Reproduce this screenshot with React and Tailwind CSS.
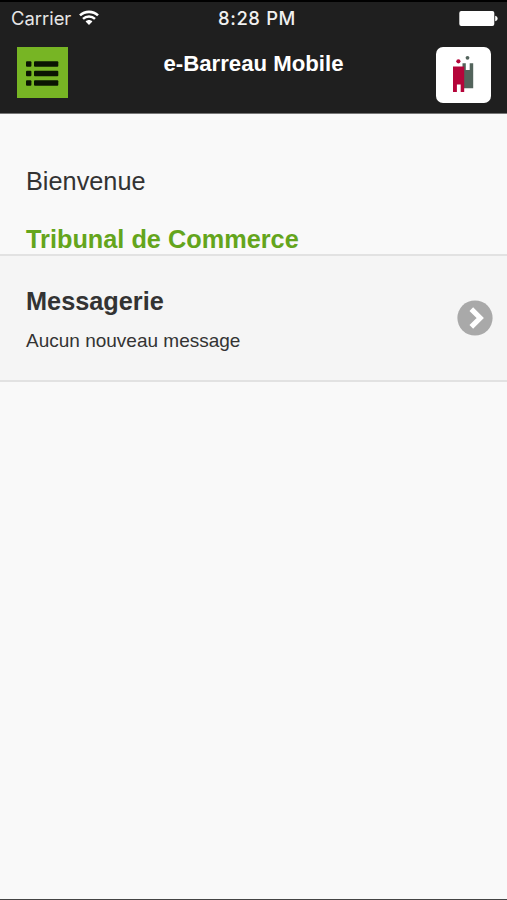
import React from "react";

const listRows = [0, 1, 2];

function WifiIcon() {
  return (
    <svg width="20" height="16" viewBox="0 0 20 16" fill="none">
      <path d="M1 5.4C6 .7 14 .7 19 5.4" stroke="#fff" strokeWidth="2.6" />
      <path d="M4 8.8C7.3 5.8 12.7 5.8 16 8.8" stroke="#fff" strokeWidth="2.5" />
      <path d="M6.6 11.5C8.4 9.5 11.6 9.5 13.4 11.5L10 15Z" fill="#fff" />
    </svg>
  );
}

function BatteryIcon() {
  return (
    <svg width="39" height="16" viewBox="0 0 39 16" fill="#fff">
      <rect x="0.3" y="0" width="35" height="15" rx="2" />
      <path d="M36.2 4.7C39.4 5.5 39.4 9.5 36.2 10.3Z" />
    </svg>
  );
}

function StatusBar() {
  return (
    <div className="grid h-[33px] grid-cols-3 items-center pl-[10px] pr-[9px] font-['Inter',sans-serif] text-white">
      <div className="flex items-center gap-[8px]">
        <span className="pl-px text-[18.4px] text-[#e6e6e6]">Carrier</span>
        <WifiIcon />
      </div>
      <div className="pl-[6px] text-center text-[18.4px] font-medium tracking-[0.65px] whitespace-nowrap text-[#f0f0f0]">
        8:28 PM
      </div>
      <div className="flex justify-end">
        <BatteryIcon />
      </div>
    </div>
  );
}

function MenuButton() {
  return (
    <button type="button" aria-label="Menu" className="h-[51px] w-[51px] bg-[#77b524]">
      <svg width="51" height="51" viewBox="0 0 51 51" fill="#0b1402">
        {listRows.map((row) => (
          <g key={row}>
            <rect x="9" y={14.3 + row * 9.5} width="5.4" height="5.5" rx="1" />
            <rect x="17" y={14.3 + row * 9.5} width="24.3" height="5.5" rx="1" />
          </g>
        ))}
      </svg>
    </button>
  );
}

function Logo() {
  return (
    <div className="h-[55.5px] w-[55px] rounded-[7px] bg-white">
      <svg width="55" height="55" viewBox="0 0 55 55">
        <path
          d="M26.5 16.2H29.8V23H33.7V16.2H37.2V41.2H26.5Z"
          fill="#53645c"
        />
        <circle cx="31.5" cy="10.8" r="1.9" fill="#53645c" />
        <path d="M17 19.4H28.2V45H24.7V37.5H20.9V45H17Z" fill="#b5053a" />
        <circle cx="22.4" cy="14.3" r="2.1" fill="#b5053a" />
      </svg>
    </div>
  );
}

function Header() {
  return (
    <header className="h-[114px] border-t-2 border-b border-t-black border-b-[#777] bg-[#1f1f1f]">
      <StatusBar />
      <div className="flex items-start justify-between pt-[12.4px] pr-4 pl-[17px]">
        <MenuButton />
        <h1 className="pt-[3px] pl-[3px] text-[22.2px] leading-[27px] font-bold text-white">
          e-Barreau Mobile
        </h1>
        <Logo />
      </div>
    </header>
  );
}

function MessageRow() {
  return (
    <a className="flex h-[128px] items-center justify-between border-y-2 border-[#e2e2e2] bg-[#f5f5f5] pr-[14px] pl-[26px]">
      <div>
        <h2 className="text-[25.3px] leading-[32px] font-bold">Messagerie</h2>
        <p className="mt-[12px] -mb-px text-[19px] leading-[24px]">Aucun nouveau message</p>
      </div>
      <svg width="36" height="36" viewBox="0 0 36 36" fill="none">
        <circle cx="18" cy="18" r="17.6" fill="#a9a9a9" />
        <path d="M14.3 9.2L23.2 18L14.3 26.8" stroke="#fff" strokeWidth="5.2" />
      </svg>
    </a>
  );
}

export default function App() {
  return (
    <div className="flex h-screen flex-col overflow-hidden border-b border-[#444] bg-[#f9f9f9] font-['Liberation_Sans',Arial,sans-serif] text-[#333]">
      <Header />
      <main>
        <div className="flex h-[140px] flex-col pt-[51px] pl-[26px]">
          <p className="text-[25.3px] leading-[32px]">Bienvenue</p>
          <h2 className="mt-[26px] text-[25.3px] leading-[32px] font-bold text-[#64a51c]">
            Tribunal de Commerce
          </h2>
        </div>
        <MessageRow />
      </main>
    </div>
  );
}
